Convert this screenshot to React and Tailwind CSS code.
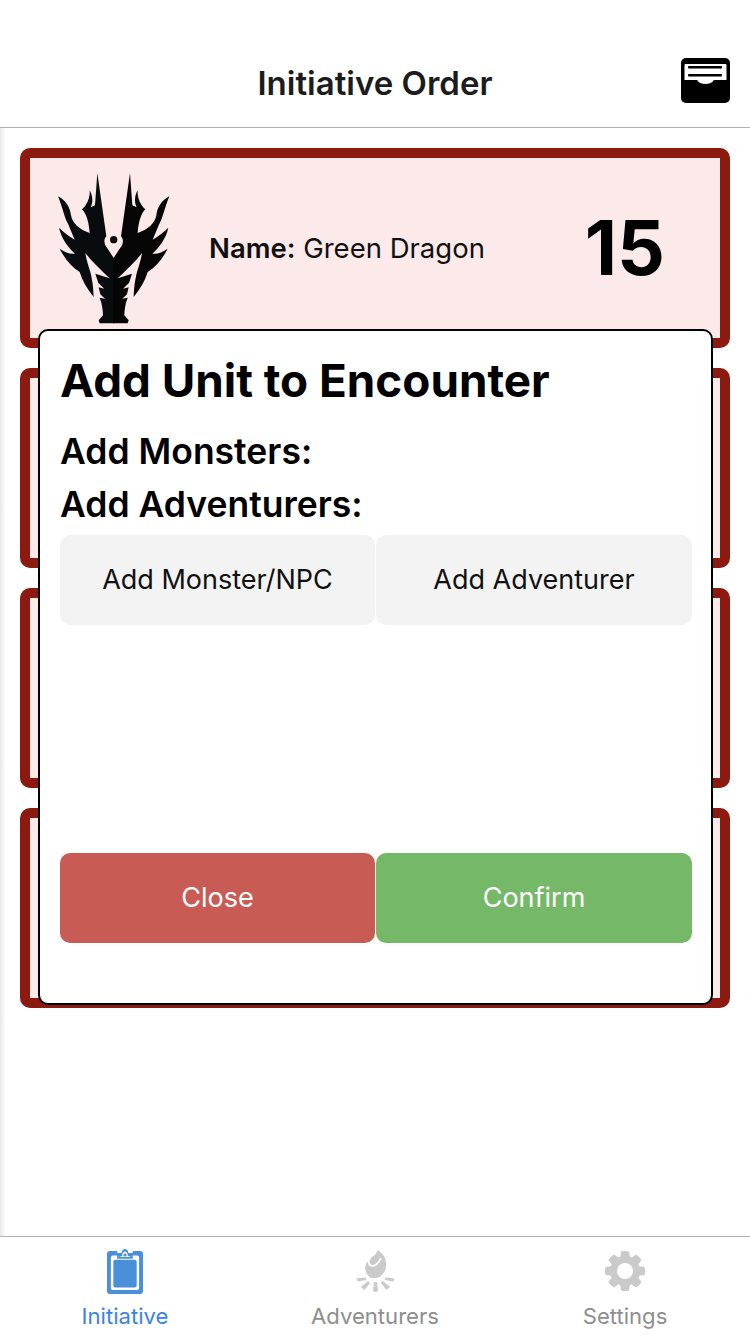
import React from "react";

const font = { fontFamily: "Inter, 'Noto Sans', sans-serif" };

function Dragon() {
  const half =
    "M293 98 L286 195 L273 201 C281 185 279 165 270 150 C272 170 262 195 247 207 C262 222 268 250 270 278 C240 268 218 250 214 225 C212 205 200 180 175 168 C190 205 195 235 205 250 L225 298 C205 285 190 275 178 262 C185 295 205 320 226 340 C210 342 195 335 180 325 C195 355 215 380 240 395 C247 420 262 445 282 470 C281 440 278 420 272 395 C266 375 260 358 257 338 C275 362 300 385 330 414 L287 400 L296 428 L314 445 L297 441 L302 462 L316 475 L300 472 C307 490 310 510 310 525 L297 540 L300 549 L344 549 L344 356 L322 322 C312 310 312 296 320 288 Z";
  return (
    <svg width="115" height="152" viewBox="172 95 345 456" className="shrink-0">
      <path d={half} fill="#090c0f" />
      <path d={half} fill="#050505" transform="translate(684 0) scale(-1 1)" />
      <circle cx="342" cy="298" r="11" fill="#090c0f" />
    </svg>
  );
}

function Inbox() {
  return (
    <svg width="49" height="45" viewBox="0 0 49 45">
      <rect x="0" y="0" width="49" height="45" rx="5" fill="#000" />
      <path d="M3.5 7 Q3.5 6 4.5 6 H44.5 Q45.5 6 45.5 7 V22 H33.5 Q32 22 31.5 24 Q29 26 24.5 26 Q20 26 17.5 24 Q17 22 15.5 22 H3.5 Z" fill="#fff" />
      <rect x="7" y="8" width="34" height="2.6" rx="1" fill="#000" />
      <rect x="7" y="16" width="34" height="2.6" rx="1" fill="#000" />
    </svg>
  );
}

function Clipboard() {
  return (
    <svg width="36" height="45" viewBox="0 0 37 46">
      <path
        d="M3 2 H10.5 L10.5 4 L15 4 C15.5 1 17 0 18.5 0 C20 0 21.5 1 22 4 L26.5 4 L26.5 2 H34 Q37 2 37 5 V43 Q37 46 34 46 H3 Q0 46 0 43 V5 Q0 2 3 2 Z"
        fill="#4a90d9"
      />
      <path d="M10.5 6.5 H6 Q4 6.5 4 8.5 V40 Q4 42 6 42 H31 Q33 42 33 40 V8.5 Q33 6.5 31 6.5 H26.5 V10 H10.5 Z" fill="#fff" />
      <rect x="6.5" y="11" width="24" height="28.5" rx="2" fill="#4a90d9" />
      <path d="M12 8 L15.5 7 C16 3.5 17 2.5 18.5 2.5 C20 2.5 21 3.5 21.5 7 L25 8 Z" fill="#fff" />
      <circle cx="18.5" cy="6" r="1.6" fill="#4a90d9" />
    </svg>
  );
}

function Campfire() {
  return (
    <svg width="39" height="43" viewBox="0 0 39 43" fill="#cacaca">
      <path d="M22 0 C28 4 31 10 30 17 C29 23 25 27 21 28 L15 28 C10 25 8 19 10 14 C12 10 15 7 19 5 C20 3 21 2 22 0 Z" />
      <path d="M19 3 C13 7 11 12 14 15 C18 18 23 13 25 8" fill="none" stroke="#fff" strokeWidth="1.8" />
      <path d="M0.5 28.5 L9.5 27.5 L10.5 30 L1.5 31.5 Z" />
      <path d="M38.5 28.5 L29.5 27.5 L28.5 30 L37.5 31.5 Z" />
      <path d="M5 37 L12 31 L14 33 L8.5 40 Z" />
      <path d="M34 37 L27 31 L25 33 L30.5 40 Z" />
      <path d="M18 32 H21 L22 41 Q19.5 43 17 41 Z" />
    </svg>
  );
}

function Gear() {
  const teeth = [0, 45, 90, 135, 180, 225, 270, 315];
  return (
    <svg width="40" height="40" viewBox="0 0 40 40">
      <g fill="#cacaca">
        {teeth.map((a) => (
          <path key={a} d="M16 0.5 Q20 -0.5 24 0.5 L25 8 H15 Z" transform={`rotate(${a} 20 20)`} />
        ))}
        <circle cx="20" cy="20" r="15" />
      </g>
      <circle cx="20" cy="20" r="8" fill="#fff" />
    </svg>
  );
}

function Card({ filled }) {
  return (
    <div className="h-[200px] rounded-[10px] border-[10px] border-[#8c1a10] bg-[#fceaea] flex items-center shrink-0">
      {filled && (
        <>
          <div className="ml-[27px]">
            <Dragon />
          </div>
          <div className="ml-[37px] text-[27.5px] text-[#111] flex-1 mt-[1px]">
            <span className="font-semibold">Name:</span> Green Dragon
          </div>
          <div className="text-[75px] font-bold text-black mr-[55px] leading-none mt-[-1px]">15</div>
        </>
      )}
    </div>
  );
}

function Tab({ icon, label, color }) {
  return (
    <div className="flex-1 flex flex-col items-center pt-[11px]">
      <div className="h-[46px] flex items-center justify-center">{icon}</div>
      <div className={`text-[22.1px] leading-[28px] mt-[8px] ${color}`}>{label}</div>
    </div>
  );
}

export default function App() {
  return (
    <div style={font} className="w-[750px] h-[1334px] bg-white flex flex-col overflow-hidden">
      <header className="h-[128px] shrink-0 border-b border-[#b2b2b2] relative flex items-center justify-center pt-[40px]">
        <h1 className="text-[33px] font-semibold text-[#1c1c1e]">Initiative Order</h1>
        <div className="absolute left-[681px] top-[58px]">
          <Inbox />
        </div>
      </header>
      <main className="flex-1 relative px-5 pt-5 flex flex-col gap-5 overflow-hidden">
        <div className="absolute left-0 top-0 bottom-0 w-[6px] bg-gradient-to-r from-[#e8e8e8] to-white" />
        <Card filled />
        <Card />
        <Card />
        <Card />
        <section className="absolute left-[38px] top-[201px] w-[675px] h-[676px] bg-white border-2 border-black rounded-[10px] pl-5 pr-[19px] flex flex-col">
          <h2 className="text-[45.8px] font-bold text-black leading-[56px] mt-[22px]">Add Unit to Encounter</h2>
          <h3 className="text-[35.5px] font-semibold text-black leading-[53px] mt-[16px]">Add Monsters:</h3>
          <h3 className="text-[35.5px] font-semibold text-black leading-[53px]">Add Adventurers:</h3>
          <div className="flex gap-px mt-[4px]">
            <button className="w-[315px] h-[90px] rounded-[10px] bg-[#f3f3f3] text-[27px] text-[#111]">Add Monster/NPC</button>
            <button className="w-[316px] h-[90px] rounded-[10px] bg-[#f3f3f3] text-[27px] text-[#111]">Add Adventurer</button>
          </div>
          <div className="flex gap-px mt-[228px]">
            <button className="w-[315px] h-[90px] rounded-[10px] bg-[#c95b55] text-[27px] text-white">Close</button>
            <button className="w-[316px] h-[90px] rounded-[10px] bg-[#75b968] text-[27px] text-white">Confirm</button>
          </div>
        </section>
      </main>
      <nav className="h-[98px] shrink-0 border-t border-[#b2b2b2] flex bg-white">
        <Tab icon={<Clipboard />} label="Initiative" color="text-[#3b82e6]" />
        <Tab icon={<Campfire />} label="Adventurers" color="text-[#8e8e8e]" />
        <Tab icon={<Gear />} label="Settings" color="text-[#8e8e8e]" />
      </nav>
    </div>
  );
}
